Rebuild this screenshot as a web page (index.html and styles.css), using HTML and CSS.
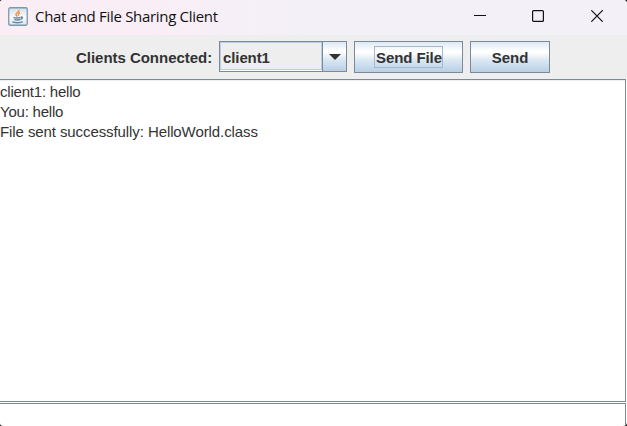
FILE: index.html
```html
<!DOCTYPE html>
<html lang="en">
<head>
<meta charset="utf-8">
<title>Chat and File Sharing Client</title>
<link rel="stylesheet" href="styles.css">
</head>
<body>
<div class="window">
  <header class="titlebar">
    <svg class="app-icon" width="20" height="19" viewBox="0 0 20 19">
      <defs><linearGradient id="tile" x1="0" y1="0" x2="0" y2="1"><stop offset="0" stop-color="#d5dfe5"/><stop offset=".55" stop-color="#fafbfc"/><stop offset="1" stop-color="#dbe4eb"/></linearGradient></defs>
      <rect x=".75" y=".75" width="18.500" height="17.500" rx="1.5" fill="url(#tile)" stroke="#7899ae" stroke-width="1.300"/>
      <path d="M10.800 3c.8 2-3.200 2.800-2.800 4.600.1.800 1 1.200 1.200 2M12 5.500c-2.500 1.200-1.600 2.100-1.500 3.300" fill="none" stroke="#ee9145" stroke-width="1.500"/>
      <path d="M5.500 10.300c1.500.8 5.500.8 7 0M6.300 12.300c1.400.8 4.600.8 5.900 0M12.800 10.200c2.400-.6 2 1.700-.2 2.100M4.500 14.700c2 1.300 8 1.300 10.200 0" fill="none" stroke="#6488a2" stroke-width="1.500"/>
    </svg>
    <span class="title">Chat and File Sharing Client</span>
    <div class="controls">
      <svg width="12" height="12" viewBox="0 0 12 12"><path d="M0 5.500h12" stroke-width="1"/></svg>
      <svg width="12" height="12" viewBox="0 0 12 12"><rect x=".6" y=".6" width="10.800" height="10.800" rx="1"/></svg>
      <svg width="12" height="12" viewBox="0 0 12 12"><path d="M.3.300l11.400 11.400M11.700.300L.3 11.700"/></svg>
    </div>
  </header>
  <div class="toolbar">
    <span class="label">Clients Connected:</span>
    <div class="combo">
      <span class="combo-value">client1</span>
      <span class="combo-arrow"><svg width="12" height="6" viewBox="0 0 12 6"><path d="M0 0h12L6 6z" fill="#333"/></svg></span>
    </div>
    <button class="button file"><span class="focus">Send File</span></button>
    <button class="button send">Send</button>
  </div>
  <main class="messages">
    <p class="short">client1: hello</p>
    <p class="short">You: hello</p>
    <p>File sent successfully: HelloWorld.class</p>
  </main>
  <div class="entry"></div>
</div>
</body>
</html>
```
FILE: styles.css
```css
* { box-sizing: border-box; }
body { margin: 0; background: #222; }
.window {
  width: 627px;
  height: 426px;
  display: flex;
  flex-direction: column;
  overflow: hidden;
  background: #fff;
  border-radius: 3px 4px 4px 3px;
  font: 15px/20px "Liberation Sans", sans-serif;
  color: #333;
}
.titlebar {
  height: 35px;
  flex: none;
  display: flex;
  align-items: center;
  padding: 0 24px 3px 8px;
  background: linear-gradient(90deg, #f9eef4, #f9eef6 25%, #f3f0f8 50%, #f3f0f8);
}
.title {
  margin-left: 7px;
  font: 15px/20px "Open Sans", sans-serif;
  letter-spacing: -0.31px;
  color: #111;
  white-space: nowrap;
}
.controls {
  display: flex;
  margin-left: auto;
}
.controls svg { fill: none; stroke: #111; stroke-width: 1.2; }
.controls svg + svg { margin-left: 46px; }
.controls svg:last-child { margin-left: 47px; }
.toolbar {
  height: 44px;
  flex: none;
  display: flex;
  align-items: flex-start;
  padding: 6px 0 0 76px;
  background: #eee;
  font-weight: bold;
}
.label {
  width: 143px;
  line-height: 33px;
  letter-spacing: -0.03px;
  white-space: nowrap;
}
.combo {
  width: 128px;
  height: 31px;
  display: flex;
  border: 1px solid #7a8a99;
}
.combo-value {
  width: 102px;
  height: 28px;
  padding-left: 2px;
  border: 1px solid #b8cfe5;
  line-height: 29px;
  letter-spacing: -0.1px;
  box-shadow: 0 1px #fff;
}
.combo-arrow {
  flex: 1;
  display: flex;
  align-items: center;
  justify-content: center;
  border-left: 1px solid #7a8a99;
}
.combo-arrow, .button {
  background: linear-gradient(#dde8f3, #fff 30%, #fff 35%, #dce8f3 60%, #b8cfe5);
}
.button {
  height: 32px;
  margin: 0 0 0 7px;
  padding: 0;
  display: flex;
  align-items: center;
  justify-content: center;
  border: 1px solid #7a8a99;
  border-radius: 0;
  font: inherit;
  color: #333;
}
.file { width: 109px; }
.send { width: 80px; padding-top: 2px; }
.focus {
  width: 69px;
  height: 22px;
  padding-left: 1px;
  border: 1px solid #a3b8cc;
  line-height: 22px;
  letter-spacing: -0.08px;
  text-align: left;
  white-space: nowrap;
}
.messages {
  width: 626px;
  height: 323px;
  flex: none;
  padding-top: 2px;
  border: solid #7a8a99;
  border-width: 1px 1px 1px 0;
  box-shadow: inset 0 1px #eee;
  letter-spacing: -0.09px;
}
.messages p { margin: 0; }
.messages .short { letter-spacing: -0.21px; }
.entry {
  width: 626px;
  height: 22px;
  margin-top: 1px;
  border: solid #7a8a99;
  border-width: 1px 1px 0 0;
}
```
